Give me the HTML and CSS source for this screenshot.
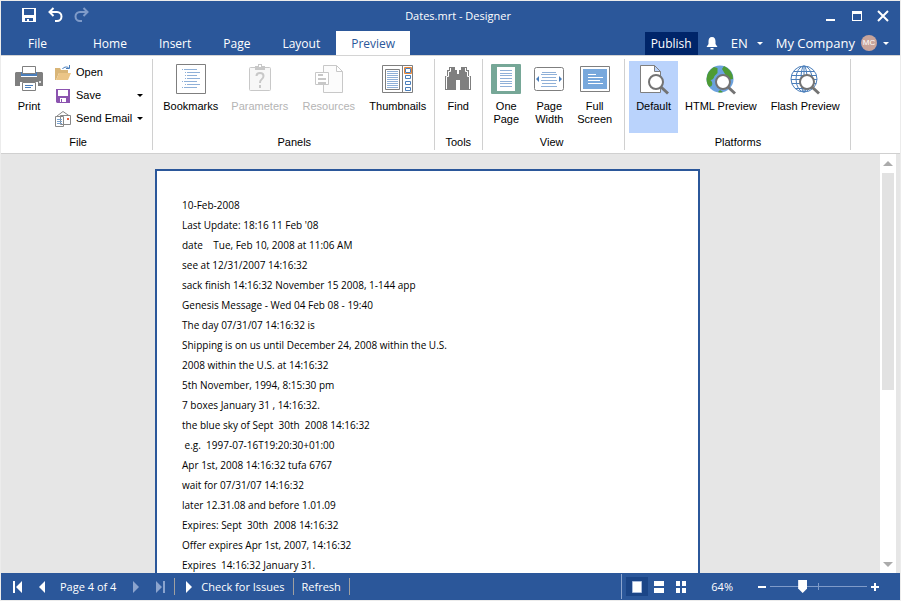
FILE: index.html
```html
<!DOCTYPE html>
<html lang="en">
<head>
    <meta charset="UTF-8">
    <meta name="viewport" content="width=device-width, initial-scale=1.0">
    <title>Dates.mrt - Designer</title>
    <link rel="stylesheet" href="styles.css">
</head>
<body>
    <div class="window">
        <header class="titlebar">
            <div class="quick-access">
                <button type="button" aria-label="Save">
                    <svg width="16" height="16" viewBox="0 0 16 16"><path fill="#fff" fill-rule="evenodd" d="M1 1h14v14H1zM3 2v6h10V2zM4 11v3h2v-2h2v2h4v-3z"/></svg>
                </button>
                <button type="button" aria-label="Undo">
                    <svg width="16" height="16" viewBox="0 0 16 16"><path fill="none" stroke="#fff" stroke-width="2" d="M6.500 1L2.500 5L6.500 9M3 5h7a4.500 4.500 0 0 1 0 9H8"/></svg>
                </button>
                <button type="button" aria-label="Redo" disabled>
                    <svg width="16" height="16" viewBox="0 0 16 16"><path fill="none" stroke="#7f9bc9" stroke-width="2" d="M10.500 1L14.500 5L10.500 9M14 5H7a4.500 4.500 0 0 0 0 9H9"/></svg>
                </button>
            </div>
            <h1 class="title">Dates.mrt - Designer</h1>
            <div class="window-buttons">
                <button type="button" aria-label="Minimize">
                    <svg width="12" height="12" viewBox="0 0 12 12"><path fill="#fff" d="M1 9h9v2H1z"/></svg>
                </button>
                <button type="button" aria-label="Maximize">
                    <svg width="12" height="12" viewBox="0 0 12 12"><path fill="#fff" fill-rule="evenodd" d="M1 1h10v10H1zM2 4v6h8V4z"/></svg>
                </button>
                <button type="button" aria-label="Close">
                    <svg width="12" height="12" viewBox="0 0 12 12"><path stroke="#fff" stroke-width="2" d="M1 1l10 10M11 1L1 11"/></svg>
                </button>
            </div>
        </header>

        <nav class="tabs">
            <a href="#" class="tab tab-file">File</a>
            <a href="#" class="tab">Home</a>
            <a href="#" class="tab">Insert</a>
            <a href="#" class="tab">Page</a>
            <a href="#" class="tab">Layout</a>
            <a href="#" class="tab tab-active">Preview</a>
            <div class="account">
                <button type="button" class="publish">Publish</button>
                <button type="button" aria-label="Notifications">
                    <svg width="12" height="14" viewBox="0 0 12 14"><path fill="#fff" d="M6 1c2.500 0 3.500 2 3.500 4.500v2.500L11.500 11H.5l2-3V5.500C2.500 3 3.500 1 6 1zM4.500 12h3v1.500h-3z"/></svg>
                </button>
                <button type="button" class="language">EN <span class="caret"></span></button>
                <button type="button" class="company">My Company <span class="avatar">MC</span><span class="caret"></span></button>
            </div>
        </nav>

        <div class="ribbon">
            <section class="group group-file">
                <div class="group-items">
                    <button type="button" class="item">
                        <svg width="30" height="32" viewBox="0 0 30 32">
                            <path fill="#7f7f7f" d="M2 9h5v5h16V9h5l1 1v13H24v-4H6v4H1V10z"/>
                            <path fill="#4a7ebb" d="M7 9h16v4H7z"/>
                            <path fill="#fff" stroke="#7f7f7f" d="M8.500 3.500h13v7h-13zM8.500 19.500h13v8h-13z"/>
                            <path stroke="#4a7ebb" d="M11 22.500h8M11 24.500h6"/>
                            <circle cx="26" cy="19" r="1" fill="#fff"/>
                        </svg>
                        <span>Print</span>
                    </button>
                    <div class="small-items">
                        <button type="button" class="small-item">
                            <svg width="16" height="16" viewBox="0 0 16 16">
                                <path fill="#d9b577" d="M0 3h5l1 2h7v3H4L1 15H0z"/>
                                <path fill="#ebc587" d="M4 8h12l-3 7H1z"/>
                                <path fill="none" stroke="#4a7ebb" d="M7.500 4a4 3 0 0 1 6-1.500M14.500 0v3.500H11"/>
                            </svg>
                            <span>Open</span>
                        </button>
                        <button type="button" class="small-item">
                            <svg width="16" height="16" viewBox="0 0 16 16">
                                <path fill="#8c54b0" fill-rule="evenodd" d="M1 1h14v14H2l-1-1zM3 2v6h10V2zM5 10v4h6v-4z"/>
                                <path fill="#fff" d="M5 10h6v4H5z"/><path fill="#8c54b0" d="M6 11h1v3H6z"/>
                            </svg>
                            <span>Save</span><span class="caret"></span>
                        </button>
                        <button type="button" class="small-item">
                            <svg width="16" height="16" viewBox="0 0 16 16">
                                <path fill="none" stroke="#888" d="M2 5L8 .5L14.500 5"/>
                                <path fill="#fff" stroke="#888" d="M5.500 4.500h10v9h-10zM.5 5.500h8v10h-8z"/>
                                <path stroke="#7aa3d0" d="M2 8.500h5M2 10.500h5M2 12.500h5"/>
                                <path fill="#e8613c" d="M12 7h2v2h-2z"/>
                            </svg>
                            <span>Send Email</span><span class="caret"></span>
                        </button>
                    </div>
                </div>
                <h2 class="group-name">File</h2>
            </section>

            <section class="group group-panels">
                <div class="group-items">
                    <button type="button" class="item">
                        <svg width="30" height="32" viewBox="0 0 30 32">
                            <path fill="#fff" stroke="#7f7f7f" d="M.5 1.500h29v29H.5z"/>
                            <path stroke="#8fb0d8" d="M6 6.500h1M8 6.500h13M9 9.500h1M11 9.500h13M9 12.500h1M11 12.500h10M9 15.500h1M11 15.500h13M6 18.500h1M8 18.500h13M9 21.500h1M11 21.500h13M6 24.500h1M8 24.500h13"/>
                        </svg>
                        <span>Bookmarks</span>
                    </button>
                    <button type="button" class="item" disabled>
                        <svg width="30" height="32" viewBox="0 0 30 32">
                            <path fill="#f7f7f7" stroke="#c8c8c8" d="M5.500 4.500h19q1 0 1 1v21q0 1-1 1h-19q-1 0-1-1v-21q0-1 1-1z"/>
                            <path fill="#c8c8c8" fill-rule="evenodd" d="M10 3h3V1h4v2h3v4H10zM14 2v2h2V2z"/>
                            <path fill="none" stroke="#c8c8c8" stroke-width="2" d="M11.500 13q0-3 3.500-3t3.500 3q0 2-2 3.500Q15 17.500 15 20M15 22v3"/>
                        </svg>
                        <span>Parameters</span>
                    </button>
                    <button type="button" class="item" disabled>
                        <svg width="30" height="32" viewBox="0 0 30 32">
                            <path fill="#fcfcfc" stroke="#c8c8c8" d="M9.500 2.500h13l6 6v21h-19zM22.500 2.500v6h6"/>
                            <path fill="#fff" stroke="#c8c8c8" d="M1.500 9.500h13v12h-13z"/>
                            <path stroke="#c8c8c8" stroke-width="2" d="M4 12h5M4 16h8M4 20h8"/>
                        </svg>
                        <span>Resources</span>
                    </button>
                    <button type="button" class="item">
                        <svg width="32" height="32" viewBox="0 0 32 32">
                            <path fill="#fff" stroke="#7f7f7f" d="M.5 2.500h30v27H.5zM20.500 2.500v27M3.500 6.500h14v20h-14z"/>
                            <path stroke="#8fb0d8" d="M5 8.500h11M5 10.500h11M5 12.500h11M5 14.500h11M5 16.500h11M5 18.500h11M5 20.500h11M5 22.500h11M5 24.500h11"/>
                            <path fill="#fff" stroke="#4a7ebb" d="M23.500 5.500h5v4h-5zM23.500 12.500h5v3h-5zM23.500 18.500h5v3h-5zM23.500 24.500h5v3h-5z"/>
                            <path fill="none" stroke="#ed8733" d="M22.500 4.500h7v6h-7z"/>
                        </svg>
                        <span>Thumbnails</span>
                    </button>
                </div>
                <h2 class="group-name">Panels</h2>
            </section>

            <section class="group group-tools">
                <div class="group-items">
                    <button type="button" class="item">
                        <svg width="30" height="32" viewBox="0 0 30 32">
                            <path fill="#7f7f7f" d="M6 4h6v3h2v4h2V7h2V4h6v3h2v6h2v14H17V17h-4v10H2V13h2V7h2z"/>
                            <path fill="none" stroke="#fff" d="M7.500 5v3.500H5.500v5h-2V26M22.500 5v3.500h2v5h2V26M9.500 6v20"/>
                            <path fill="none" stroke="#7f7f7f" d="M9.500 6v20"/>
                        </svg>
                        <span>Find</span>
                    </button>
                </div>
                <h2 class="group-name">Tools</h2>
            </section>

            <section class="group group-view">
                <div class="group-items">
                    <button type="button" class="item">
                        <svg width="30" height="32" viewBox="0 0 30 32">
                            <rect y="1" width="30" height="30" rx="1" fill="#76a797"/>
                            <path fill="#fff" d="M6 4h18v24H6z"/>
                            <path stroke="#8fb0d8" d="M9 7.500h12M9 10.500h12M9 12.500h12M9 15.500h12M9 18.500h12M9 20.500h12M9 23.500h12"/>
                        </svg>
                        <span>One<br>Page</span>
                    </button>
                    <button type="button" class="item">
                        <svg width="30" height="32" viewBox="0 0 30 32">
                            <rect x=".5" y="4.500" width="29" height="23" rx="2" fill="#fff" stroke="#7f7f7f"/>
                            <path stroke="#8fb0d8" d="M8 9.500h14M7 11.500h16M8 14.500h14M7 17.500h16M8 20.500h14M7 23.500h16"/>
                            <path fill="#4a7ebb" d="M5 13v6l-3-3zM25 13v6l3-3z"/>
                        </svg>
                        <span>Page<br>Width</span>
                    </button>
                    <button type="button" class="item">
                        <svg width="30" height="32" viewBox="0 0 30 32">
                            <path fill="#fff" stroke="#7f7f7f" d="M.5 3.500h29v25H.5z"/>
                            <path fill="#78a8dc" d="M3 6h24v20H3z"/>
                            <path stroke="#fff" d="M8 11.500h8M8 14.500h15M8 17.500h12M8 20.500h15"/>
                        </svg>
                        <span>Full<br>Screen</span>
                    </button>
                </div>
                <h2 class="group-name">View</h2>
            </section>

            <section class="group group-platforms">
                <div class="group-items">
                    <button type="button" class="item item-selected">
                        <svg width="30" height="32" viewBox="0 0 30 32">
                            <path fill="#fff" stroke="#7f7f7f" d="M1.500 2.500h14l6 6v21h-20zM15.500 2.500v6h6"/>
                            <circle cx="17" cy="19" r="7" fill="#fff" stroke="#737373" stroke-width="2"/>
                            <path stroke="#737373" stroke-width="3" d="M22 24l7 6.500"/>
                        </svg>
                        <span>Default</span>
                    </button>
                    <button type="button" class="item">
                        <svg width="30" height="32" viewBox="0 0 30 32">
                            <circle cx="14" cy="16" r="13.500" fill="#6ba2df"/>
                            <path fill="#4e9b34" d="M8 4q-7 4-7.500 12q0 5 3 8l2-1q2-3-1-6q3 0 4-4l3-3V5zM18 3l-2 3 3 5 2 6 6-1q0-9-9-13zM14 27l3 2q-3 1-5 0z"/>
                            <circle cx="17" cy="19" r="7" fill="#fff" stroke="#737373" stroke-width="2"/>
                            <path stroke="#737373" stroke-width="3" d="M22 24l7 6.500"/>
                        </svg>
                        <span>HTML Preview</span>
                    </button>
                    <button type="button" class="item">
                        <svg width="30" height="32" viewBox="0 0 30 32">
                            <g fill="#fff" stroke="#4a7ebb">
                                <circle cx="14" cy="16" r="13"/>
                                <ellipse cx="14" cy="16" rx="8" ry="13"/>
                                <ellipse cx="14" cy="16" rx="3" ry="13"/>
                                <path d="M4 8.500h20M1.500 12.500h25M1 16.500h26M2 20.500h24M5 25.500h18M14 3v26"/>
                            </g>
                            <circle cx="17" cy="19" r="7" fill="#fff" stroke="#737373" stroke-width="2"/>
                            <path stroke="#737373" stroke-width="3" d="M22 24l7 6.500"/>
                        </svg>
                        <span>Flash Preview</span>
                    </button>
                </div>
                <h2 class="group-name">Platforms</h2>
            </section>
        </div>

        <main class="workspace">
            <div class="canvas">
                <article class="page">
                    <p>10-Feb-2008</p>
                    <p>Last Update: 18:16 11 Feb '08</p>
                    <p>date    Tue, Feb 10, 2008 at 11:06 AM</p>
                    <p>see at 12/31/2007 14:16:32</p>
                    <p>sack finish 14:16:32 November 15 2008, 1-144 app</p>
                    <p>Genesis Message - Wed 04 Feb 08 - 19:40</p>
                    <p>The day 07/31/07 14:16:32 is</p>
                    <p>Shipping is on us until December 24, 2008 within the U.S.</p>
                    <p>2008 within the U.S. at 14:16:32</p>
                    <p>5th November, 1994, 8:15:30 pm</p>
                    <p>7 boxes January 31 , 14:16:32.</p>
                    <p>the blue sky of Sept  30th  2008 14:16:32</p>
                    <p> e.g.  1997-07-16T19:20:30+01:00</p>
                    <p>Apr 1st, 2008 14:16:32 tufa 6767</p>
                    <p>wait for 07/31/07 14:16:32</p>
                    <p>later 12.31.08 and before 1.01.09</p>
                    <p>Expires: Sept  30th  2008 14:16:32</p>
                    <p>Offer expires Apr 1st, 2007, 14:16:32</p>
                    <p>Expires  14:16:32 January 31.</p>
                </article>
            </div>
            <div class="scrollbar">
                <button type="button" aria-label="Scroll up"><span class="arrow-up"></span></button>
                <div class="scroll-track"><div class="scroll-thumb"></div></div>
                <button type="button" aria-label="Scroll down"><span class="arrow-down"></span></button>
            </div>
        </main>

        <footer class="statusbar">
            <button type="button" class="nav-button" aria-label="First page">
                <svg width="12" height="12" viewBox="0 0 12 12"><path fill="#fff" d="M1 0h2v12H1zM10 0v12L4 6z"/></svg>
            </button>
            <button type="button" class="nav-button" aria-label="Previous page">
                <svg width="12" height="12" viewBox="0 0 12 12"><path fill="#fff" d="M9 0v12L3 6z"/></svg>
            </button>
            <span class="page-count">Page 4 of 4</span>
            <button type="button" class="nav-button" aria-label="Next page" disabled>
                <svg width="12" height="12" viewBox="0 0 12 12"><path fill="#8ba4ce" d="M3 0v12l6-6z"/></svg>
            </button>
            <button type="button" class="nav-button" aria-label="Last page" disabled>
                <svg width="12" height="12" viewBox="0 0 12 12"><path fill="#8ba4ce" d="M9 0h2v12H9zM2 0v12l6-6z"/></svg>
            </button>
            <button type="button" class="status-button">
                <svg width="12" height="12" viewBox="0 0 12 12"><path fill="#fff" d="M3 0v12l6-6z"/></svg>
                <span>Check for Issues</span>
            </button>
            <button type="button" class="status-button refresh">Refresh</button>
            <div class="view-modes">
                <button type="button" class="mode mode-active" aria-label="Single page">
                    <svg width="12" height="12" viewBox="0 0 12 12"><path fill="#fff" stroke="#a9bcdc" d="M1.500.5h9v11h-9z"/></svg>
                </button>
                <button type="button" class="mode" aria-label="Continuous">
                    <svg width="12" height="12" viewBox="0 0 12 12"><path fill="#fff" d="M1 0h10v5H1zM1 7h10v5H1z"/></svg>
                </button>
                <button type="button" class="mode" aria-label="Multiple pages">
                    <svg width="12" height="12" viewBox="0 0 12 12"><path fill="#fff" d="M1 0h4v5H1zM7 0h4v5H7zM1 7h4v5H1zM7 7h4v5H7z"/></svg>
                </button>
            </div>
            <label for="zoom" class="zoom-label">64%</label>
            <button type="button" class="zoom-button" aria-label="Zoom out">
                <svg width="12" height="12" viewBox="0 0 12 12"><path fill="#fff" d="M2 5h8v2H2z"/></svg>
            </button>
            <input type="range" id="zoom" class="zoom-slider" min="0" max="200" value="64">
            <button type="button" class="zoom-button" aria-label="Zoom in">
                <svg width="12" height="12" viewBox="0 0 12 12"><path fill="#fff" d="M2 5h3V2h2v3h3v2H7v3H5V7H2z"/></svg>
            </button>
        </footer>
    </div>
</body>
</html>
```
FILE: styles.css
```css
* {
    margin: 0;
    padding: 0;
    box-sizing: border-box;
}

body {
    font-family: "Open Sans", "Noto Sans", sans-serif;
    font-size: 12px;
    color: #000;
}

button {
    background: none;
    border: none;
    font: inherit;
    color: inherit;
    cursor: pointer;
}

svg {
    display: block;
    flex: none;
}

.window {
    height: 100vh;
    display: flex;
    flex-direction: column;
    border: 1px solid #ececec;
    overflow: hidden;
}

/* Title bar */
.titlebar {
    display: grid;
    grid-template-columns: 1fr auto 1fr;
    align-items: center;
    height: 30px;
    padding: 0 11px 0 20px;
    background: #2b579a;
    color: #fff;
}

.quick-access {
    display: flex;
    gap: 10px;
    padding-bottom: 2px;
}

.title {
    padding: 0 0 2px 6px;
    font-size: 11px;
    font-weight: normal;
}

.window-buttons {
    display: flex;
    justify-content: flex-end;
    gap: 14px;
}

/* Tabs */
.tabs {
    display: flex;
    height: 24px;
    background: #2b579a;
    color: #fff;
}

.tab {
    padding: 0 16px;
    color: #fff;
    font-size: 12px;
    line-height: 25px;
    text-decoration: none;
}

.tab-file {
    padding: 0 30px 0 27px;
}

.tab-active {
    padding: 0 15px;
    background: #fff;
    color: #2b579a;
}

.account {
    display: flex;
    align-items: center;
    margin-left: auto;
    padding-right: 11px;
    gap: 8px;
    font-size: 13px;
}

.account button {
    display: flex;
    align-items: center;
    height: 23px;
    white-space: nowrap;
}

.account .publish {
    align-self: flex-end;
    padding: 0 6px;
    background: #002569;
    font-size: 12px;
}

.language {
    padding: 0 5px;
    gap: 9px;
}

.company {
    gap: 6px;
}

.avatar {
    width: 16px;
    height: 16px;
    border-radius: 50%;
    background: #c8a49b;
    font-family: "Liberation Sans", Arial, sans-serif;
    font-size: 8px;
    line-height: 16px;
    text-align: center;
}

.caret {
    border: 3px solid transparent;
    border-top-color: currentColor;
    border-bottom: none;
}

/* Ribbon */
.ribbon {
    display: flex;
    height: 99px;
    padding-top: 3px;
    background: #fff;
    border-top: 1px solid #d4d4d4;
    border-bottom: 1px solid #d0d0d0;
    font-family: "Liberation Sans", Arial, sans-serif;
    font-size: 11px;
    line-height: 13px;
}

.group {
    display: flex;
    flex-direction: column;
    justify-content: space-between;
    height: 91px;
    padding: 2px 3px 0;
    border-right: 1px solid #d0d0d0;
}

.group-items {
    display: flex;
    height: 72px;
}

.group-name {
    padding-bottom: 1px;
    font-size: 11px;
    font-weight: normal;
    text-align: center;
}

.item {
    display: flex;
    flex-direction: column;
    align-items: center;
    gap: 5px;
    padding: 2px 7px 0;
    white-space: nowrap;
}

.item:disabled {
    color: #b4b4b4;
    cursor: default;
}

.item-selected {
    background: #bad3fc;
}

.group-file {
    padding-left: 6px;
}

.small-items {
    display: flex;
    flex-direction: column;
    padding: 0 6px 3px 4px;
}

.small-item {
    display: flex;
    align-items: center;
    flex: 1;
    gap: 5px;
}

.small-item .caret {
    margin-left: auto;
}

.group-panels {
    padding-right: 2px;
}

.group-panels .item {
    width: 69px;
}

.group-tools {
    padding-left: 1px;
    padding-right: 2px;
}

.group-view {
    padding-left: 2px;
    padding-right: 6px;
}

.group-view .group-items {
    gap: 1px;
}

.group-view .item {
    padding: 2px 6px 0;
}

.group-platforms {
    padding-left: 4px;
}

/* Document area */
.workspace {
    flex: 1;
    display: flex;
    min-height: 0;
    background: #e6e6e6;
}

.canvas {
    flex: 1;
    display: flex;
    padding: 15px 180px 0 154px;
    overflow: hidden;
}

.page {
    flex: 1;
    align-self: flex-start;
    min-height: 700px;
    padding: 24px 25px;
    background: #fff;
    border: 2px solid #2b579a;
    font-size: 10px;
    line-height: 20px;
}

.page p {
    white-space: pre;
}

.scrollbar {
    display: flex;
    flex-direction: column;
    width: 16px;
    margin-right: 4px;
    background: #fff;
}

.scrollbar button {
    display: flex;
    justify-content: center;
    align-items: center;
    height: 18px;
}

.scroll-track {
    flex: 1;
    padding: 1px 2px;
}

.scroll-thumb {
    height: 57%;
    background: #e2e2e2;
}

.arrow-up,
.arrow-down {
    border: 5px solid transparent;
}

.arrow-up {
    border-top: none;
    border-bottom-color: #ababab;
}

.arrow-down {
    border-bottom: none;
    border-top-color: #ababab;
}

/* Status bar */
.statusbar {
    display: flex;
    align-items: center;
    height: 27px;
    padding-right: 19px;
    background: #2b579a;
    color: #fff;
    font-size: 11px;
    white-space: nowrap;
}

.nav-button {
    padding: 0 6px;
}

.nav-button:first-child {
    padding-left: 11px;
}

.page-count {
    padding: 0 8px 0 6px;
}

.status-button {
    display: flex;
    align-items: center;
    height: 17px;
    padding: 0 8px;
    gap: 6px;
    border-right: 1px solid #a0a0a0;
}

.nav-button + .status-button {
    margin-left: 2px;
    border-left: 1px solid #a0a0a0;
}

.view-modes {
    display: flex;
    margin-left: auto;
    padding-left: 4px;
    height: 25px;
    align-items: center;
    border-left: 1px solid #8ba4ce;
}

.mode {
    height: 19px;
    padding: 0 5px;
}

.mode-active {
    background: #1b4587;
}

.zoom-label {
    padding: 0 23px 0 19px;
}

.zoom-slider {
    width: 97px;
    height: 16px;
    margin: 0 2px;
    appearance: none;
    background:
        linear-gradient(#7f9bc9, #7f9bc9) center / 1px 7px no-repeat,
        linear-gradient(#7f9bc9, #7f9bc9) center / 100% 1px no-repeat;
}

.zoom-slider::-webkit-slider-thumb {
    appearance: none;
    width: 9px;
    height: 13px;
    background: #fff;
    clip-path: polygon(0 0, 100% 0, 100% 66%, 50% 100%, 0 66%);
}
```
